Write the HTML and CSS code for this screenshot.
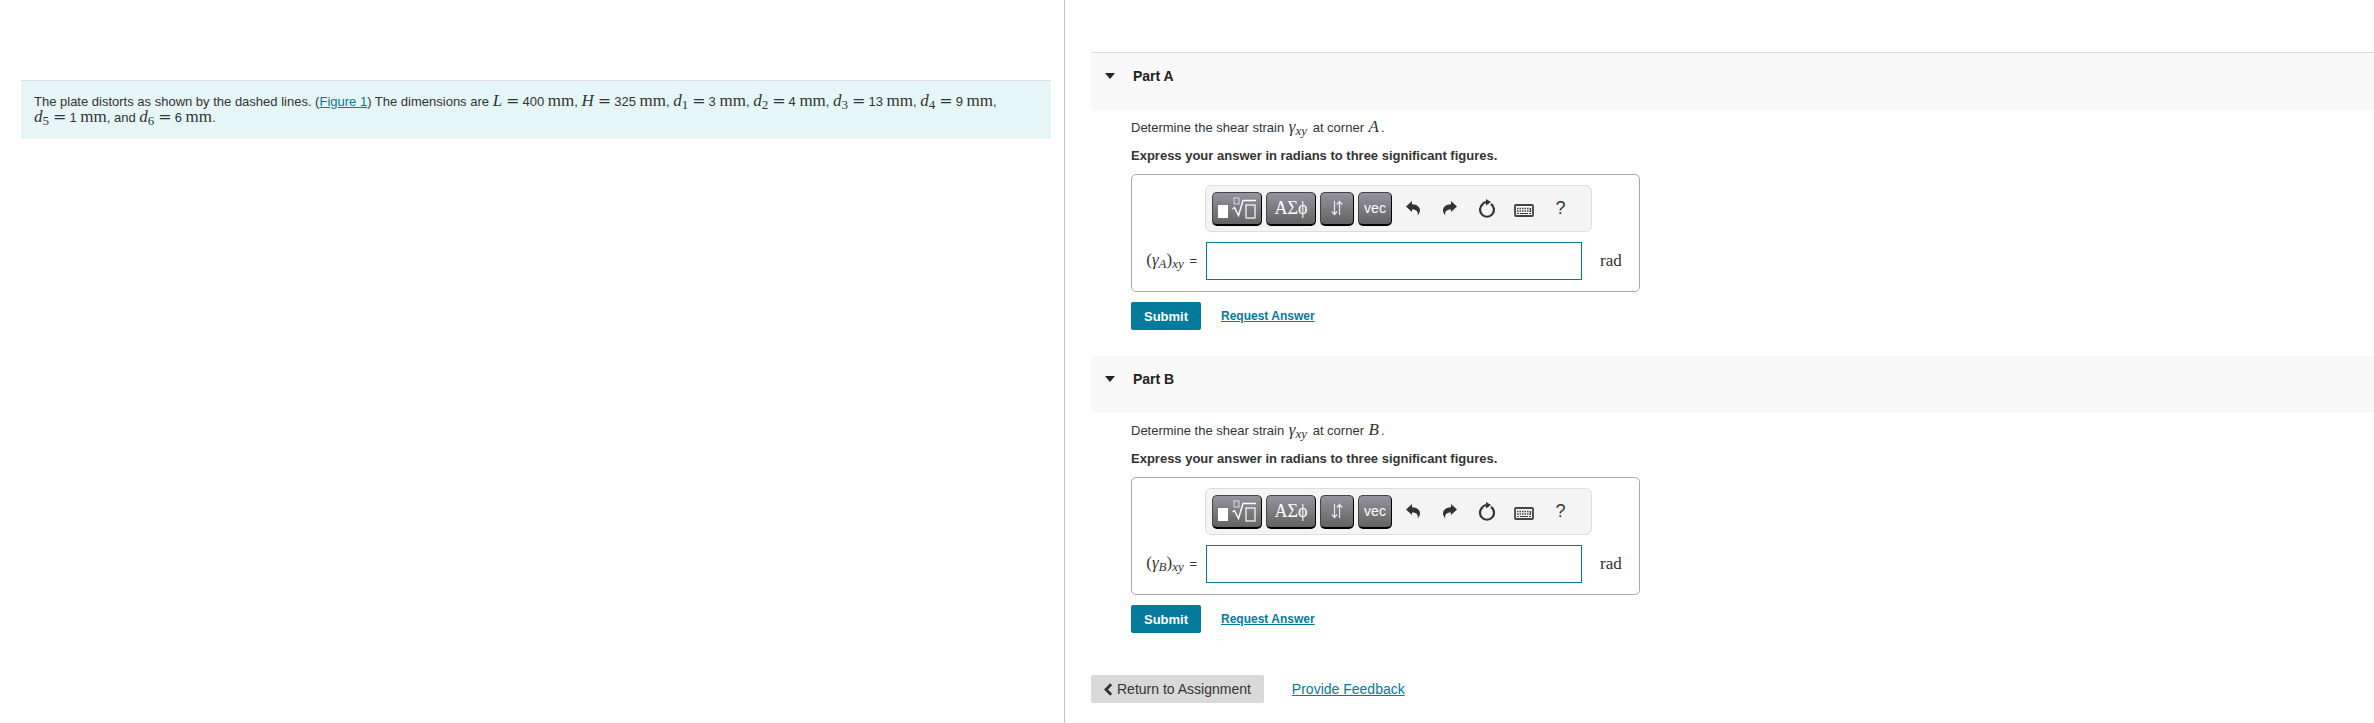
FILE: index.html
```html
<!DOCTYPE html>
<html lang="en">
<head>
    <meta charset="utf-8">
    <title>Shear strain</title>
    <link rel="stylesheet" href="styles.css">
</head>
<body>
    <!-- icons shared by both toolbars -->
    <svg class="icon-defs" width="0" height="0">
        <symbol id="icon-template" viewBox="0 0 38 22">
            <rect x="0" y="8" width="10" height="13" fill="#fff"/>
            <rect x="16" y="1" width="5" height="6" fill="none" stroke="#ddd"/>
            <path d="M14.5 12l2-1.5 4 8L25 3.5h13" fill="none" stroke="#fff" stroke-width="1.4"/>
            <rect x="28" y="8" width="9" height="13" fill="none" stroke="#fff" stroke-width="1.2"/>
        </symbol>
        <symbol id="icon-arrows" viewBox="0 0 12 16">
            <path d="M3.5 1v13M.8 11.5l2.7 3 2.7-3M8.5 15V2M5.8 4.5l2.7-3 2.7 3" fill="none" stroke="#e8e8e8" stroke-width="1.2"/>
        </symbol>
        <symbol id="icon-undo" viewBox="0 0 14 15">
            <path d="M0 5.5L6 0v3.2c5 0 8 3 8 6 0 2-1 3.8-2.5 5.3 1-3.5-.5-6-5.5-6V11z" fill="#333"/>
        </symbol>
        <symbol id="icon-redo" viewBox="0 0 14 15">
            <path d="M14 5.5L8 0v3.2c-5 0-8 3-8 6 0 2 1 3.8 2.5 5.3-1-3.5.5-6 5.500-6V11z" fill="#333"/>
        </symbol>
        <symbol id="icon-reset" viewBox="0 0 18 19">
            <path d="M13 5A7 7 0 1 1 5 5" fill="none" stroke="#333" stroke-width="2.2"/>
            <path d="M4.500 4.800C6 3.500 7.500 3 9 3" fill="none" stroke="#333" stroke-width="2"/>
            <path d="M8 0l5 3-5 3.500z" fill="#333"/>
        </symbol>
        <symbol id="icon-keyboard" viewBox="0 0 20 13">
            <rect x="1" y="1" width="18" height="11" rx="1" fill="none" stroke="#444" stroke-width="1.8"/>
            <path d="M3 4.5h13M3 7h13" stroke="#444" stroke-width="1.5" stroke-dasharray="1.5 1"/>
            <path d="M3 9.5h2M6 9.5h8M15 9.5h2M16.5 4v4" stroke="#444" stroke-width="1.2"/>
        </symbol>
        <symbol id="icon-back" viewBox="0 0 9 13">
            <path d="M7.2 1.3L2 6.5l5.2 5.2" fill="none" stroke="#333" stroke-width="2.8"/>
        </symbol>
    </svg>

    <main class="layout">
        <section class="problem-pane">
            <p class="problem">
                The plate distorts as shown by the dashed lines. (<a href="#figure1">Figure 1</a>) The dimensions are
                <span class="math"><i>L</i><b class="eq">=</b></span>400 <span class="math">mm</span>,
                <span class="math"><i>H</i><b class="eq">=</b></span>325 <span class="math">mm</span>,
                <span class="math"><i>d</i><sub>1</sub><b class="eq">=</b></span>3 <span class="math">mm</span>,
                <span class="math"><i>d</i><sub>2</sub><b class="eq">=</b></span>4 <span class="math">mm</span>,
                <span class="math"><i>d</i><sub>3</sub><b class="eq">=</b></span>13 <span class="math">mm</span>,
                <span class="math"><i>d</i><sub>4</sub><b class="eq">=</b></span>9 <span class="math">mm</span>,
                <span class="math"><i>d</i><sub>5</sub><b class="eq">=</b></span>1 <span class="math">mm</span>, and
                <span class="math"><i>d</i><sub>6</sub><b class="eq">=</b></span>6 <span class="math">mm</span>.
            </p>
        </section>

        <section class="answer-pane">
            <article class="part">
                <header class="part-header">
                    <span class="caret"></span>
                    <h2>Part A</h2>
                </header>
                <div class="part-body">
                    <p>Determine the shear strain <span class="math symbol"><i>γ<sub>xy</sub></i></span> at corner <span class="math symbol"><i>A</i></span>.</p>
                    <p class="instruction">Express your answer in radians to three significant figures.</p>
                    <div class="answer-box">
                        <div class="toolbar">
                            <button class="tool wide" aria-label="Templates"><svg width="38" height="22"><use href="#icon-template"/></svg></button>
                            <button class="tool wide greek">ΑΣϕ</button>
                            <button class="tool" aria-label="Subscripts"><svg width="12" height="16"><use href="#icon-arrows"/></svg></button>
                            <button class="tool">vec</button>
                            <button class="plain" aria-label="Undo"><svg width="14" height="15"><use href="#icon-undo"/></svg></button>
                            <button class="plain" aria-label="Redo"><svg width="14" height="15"><use href="#icon-redo"/></svg></button>
                            <button class="plain" aria-label="Reset"><svg width="18" height="19"><use href="#icon-reset"/></svg></button>
                            <button class="plain" aria-label="Keyboard"><svg class="keyboard" width="20" height="13"><use href="#icon-keyboard"/></svg></button>
                            <button class="plain help">?</button>
                        </div>
                        <div class="answer-row">
                            <label for="answer-a"><span class="math symbol">(<i>γ<sub>A</sub></i>)<i><sub>xy</sub></i></span> =</label>
                            <input type="text" id="answer-a">
                            <span class="math unit">rad</span>
                        </div>
                    </div>
                    <div class="actions">
                        <button class="submit">Submit</button>
                        <a href="#request-a">Request Answer</a>
                    </div>
                </div>
            </article>

            <article class="part">
                <header class="part-header">
                    <span class="caret"></span>
                    <h2>Part B</h2>
                </header>
                <div class="part-body">
                    <p>Determine the shear strain <span class="math symbol"><i>γ<sub>xy</sub></i></span> at corner <span class="math symbol"><i>B</i></span>.</p>
                    <p class="instruction">Express your answer in radians to three significant figures.</p>
                    <div class="answer-box">
                        <div class="toolbar">
                            <button class="tool wide" aria-label="Templates"><svg width="38" height="22"><use href="#icon-template"/></svg></button>
                            <button class="tool wide greek">ΑΣϕ</button>
                            <button class="tool" aria-label="Subscripts"><svg width="12" height="16"><use href="#icon-arrows"/></svg></button>
                            <button class="tool">vec</button>
                            <button class="plain" aria-label="Undo"><svg width="14" height="15"><use href="#icon-undo"/></svg></button>
                            <button class="plain" aria-label="Redo"><svg width="14" height="15"><use href="#icon-redo"/></svg></button>
                            <button class="plain" aria-label="Reset"><svg width="18" height="19"><use href="#icon-reset"/></svg></button>
                            <button class="plain" aria-label="Keyboard"><svg class="keyboard" width="20" height="13"><use href="#icon-keyboard"/></svg></button>
                            <button class="plain help">?</button>
                        </div>
                        <div class="answer-row">
                            <label for="answer-b"><span class="math symbol">(<i>γ<sub>B</sub></i>)<i><sub>xy</sub></i></span> =</label>
                            <input type="text" id="answer-b">
                            <span class="math unit">rad</span>
                        </div>
                    </div>
                    <div class="actions">
                        <button class="submit">Submit</button>
                        <a href="#request-b">Request Answer</a>
                    </div>
                </div>
            </article>

            <footer class="page-footer">
                <button class="return"><svg width="9" height="13"><use href="#icon-back"/></svg>Return to Assignment</button>
                <a href="#feedback">Provide Feedback</a>
            </footer>
        </section>
    </main>
</body>
</html>
```
FILE: styles.css
```css
* {
    box-sizing: border-box;
}
body {
    margin: 0;
    background-color: #fff;
    color: #333;
    font-family: Arial, "Liberation Sans", sans-serif;
    font-size: 13px;
    line-height: 16px;
}
p, h2 {
    margin: 0;
}
a {
    color: #047a9c;
}
button, input {
    font-family: inherit;
    padding: 0;
}
button {
    cursor: pointer;
}
.icon-defs {
    position: absolute;
}
.layout {
    display: grid;
    grid-template-columns: 1064fr 1310fr;
    min-height: 100vh;
}

/* problem statement */
.problem-pane {
    padding: 80px 13px 0 21px;
}
.problem {
    padding: 13px;
    background-color: #e6f6f6;
    border-top: 1px solid #ddd;
}
.math {
    font-family: "Liberation Serif", serif;
    font-size: 17px;
    line-height: 0;
    white-space: nowrap;
}
.math sub {
    font-size: 13px;
    line-height: 0;
    vertical-align: -3px;
}
.symbol {
    margin: 0 2px 0 1px;
}
.eq {
    font-family: "DejaVu Sans", sans-serif;
    font-size: 16px;
    font-weight: normal;
    margin: 0 3px 0 4px;
}

/* parts */
.answer-pane {
    padding: 52px 0 0 26px;
    border-left: 1px solid #b8c9d9;
}
.part {
    margin-bottom: 26px;
}
.part:first-child {
    border-top: 1px solid #ddd;
}
.part-header {
    display: flex;
    padding: 15px 14px 26px;
    background-color: #f9f9f9;
    color: #222;
}
.caret {
    margin: 5px 18px 0 0;
    border: 5px solid transparent;
    border-top: 6px solid #222;
    border-bottom: 0;
    height: 6px;
}
.part-header h2 {
    font-size: 14px;
}
.part-body {
    padding: 10px 0 0 40px;
}
.instruction {
    margin-top: 12px;
    font-weight: bold;
}
.answer-box {
    max-width: 509px;
    margin-top: 10px;
    padding: 10px 0 11px;
    border: 1px solid #aaa;
    border-radius: 5px;
}
.toolbar {
    display: flex;
    align-items: center;
    gap: 4px;
    width: 387px;
    height: 47px;
    margin-left: 73px;
    padding: 0 6px;
    background-color: #f4f4f4;
    border: 1px solid #ddd;
    border-radius: 6px;
}
.tool {
    display: flex;
    align-items: center;
    justify-content: center;
    width: 34px;
    height: 34px;
    background: linear-gradient(#95939d, #636363);
    border: 1px solid #444;
    border-right-color: #000;
    border-bottom: 2px solid #000;
    border-radius: 5px;
    color: #fff;
    font-size: 14px;
}
.wide {
    width: 50px;
}
.greek {
    font-family: "Liberation Serif", serif;
    font-size: 18px;
}
.plain {
    display: flex;
    align-items: center;
    justify-content: center;
    width: 33px;
    height: 34px;
    background: none;
    border: 0;
    color: #333;
}
.keyboard {
    margin-top: 4px;
}
.help {
    font-size: 18px;
}
.answer-row {
    display: flex;
    align-items: center;
    margin-top: 10px;
}
.answer-row label {
    width: 65px;
    margin-right: 9px;
    text-align: right;
}
.answer-row input {
    width: 376px;
    height: 38px;
    border: 1px solid #047a9c;
    background-color: #fff;
}
.unit {
    margin-left: 18px;
}
.actions {
    display: flex;
    align-items: center;
    gap: 20px;
    margin-top: 10px;
}
.actions a {
    font-size: 12px;
    font-weight: bold;
}
.submit {
    width: 70px;
    height: 28px;
    background-color: #047a9c;
    border: 0;
    border-radius: 2px;
    color: #fff;
    font-size: 13px;
    font-weight: bold;
}

/* footer */
.page-footer {
    display: flex;
    align-items: center;
    gap: 28px;
    padding: 16px 0 20px;
    font-size: 14px;
}
.return {
    display: flex;
    align-items: center;
    gap: 4px;
    height: 28px;
    padding: 0 13px;
    background-color: #d9d9d9;
    border: 0;
    border-radius: 2px;
    color: #333;
    font-size: 14px;
}
```
